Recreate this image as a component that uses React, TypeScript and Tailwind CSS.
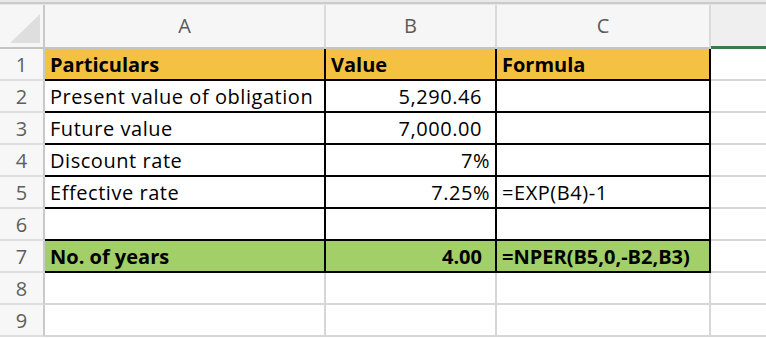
import React from 'react'

type Row = {
  n: number
  a?: string
  b?: string
  c?: string
  kind?: 'head' | 'total' | 'plain' | 'empty'
  bPad?: 'num' | 'pct'
}

const rows: Row[] = [
  { n: 1, a: 'Particulars', b: 'Value', c: 'Formula', kind: 'head' },
  { n: 2, a: 'Present value of obligation', b: '5,290.46', bPad: 'num' },
  { n: 3, a: 'Future value', b: '7,000.00', bPad: 'num' },
  { n: 4, a: 'Discount rate', b: '7%', bPad: 'pct' },
  { n: 5, a: 'Effective rate', b: '7.25%', c: '=EXP(B4)-1', bPad: 'pct' },
  { n: 6 },
  { n: 7, a: 'No. of years', b: '4.00', c: '=NPER(B5,0,-B2,B3)', kind: 'total', bPad: 'num' },
  { n: 8, kind: 'empty' },
  { n: 9, kind: 'empty' },
]

const ColHead = ({ label, last }: { label: string; last?: boolean }) => (
  <div
    className={
      last
        ? 'h-[44px] bg-[#efefef] border-b-[3px] border-[#3d7a4b]'
        : 'h-[44px] bg-[#f6f6f6] border-b-2 border-r-2 border-b-[#c4c4c4] border-r-[#dadada] flex items-center justify-center text-[20px] text-[#5b5b5b]'
    }
  >
    {label}
  </div>
)

const App = () => {
  return (
    <div className="w-[766px] h-[338px] overflow-hidden bg-white font-['Open_Sans','Liberation_Sans',sans-serif] text-black">
      <div className="h-[2px] bg-[#e8e8e8]" />
      <div className="h-[2px] bg-[#cbcbcb]" />
      <div className="h-[1px] bg-[#e6e6e6]" />

      <div className="grid grid-cols-[45px_281px_171px_214px_1fr]">
        {/* corner */}
        <div className="h-[44px] bg-[#f6f6f6] border-b-2 border-r-2 border-b-[#c4c4c4] border-r-[#c9c9c9]">
          <svg width="43" height="42" viewBox="0 0 43 42">
            <polygon points="10,38 40,38 40,9" fill="#dedede" />
          </svg>
        </div>
        <ColHead label="A" />
        <ColHead label="B" />
        <ColHead label="C" />
        <ColHead label="" last />

        {rows.map((r) => {
          const boxed = r.kind !== 'empty'
          const fill =
            r.kind === 'head'
              ? 'bg-[#f5c143] font-bold'
              : r.kind === 'total'
                ? 'bg-[#a3cf68] font-bold'
                : 'bg-white tracking-[0.55px]'
          const edge = boxed
            ? 'border-r-2 border-b-2 border-black'
            : 'border-r-2 border-b-2 border-[#d6d6d6]'
          const bAlign =
            r.kind === 'head'
              ? 'justify-start pl-[5px]'
              : r.bPad === 'num'
                ? 'justify-end pr-[13px]'
                : 'justify-end pr-[5px]'
          return (
            <React.Fragment key={r.n}>
              <div className="h-[32px] bg-[#f7f7f7] border-r-2 border-b-2 border-r-[#c9c9c9] border-b-[#dedede] flex items-end justify-center pb-[1px] text-[20px] leading-[26px] text-[#5e5e5e]">
                {r.n}
              </div>
              <div className={`h-[32px] ${fill} ${edge} flex items-end pl-[5px] pb-[1px] text-[20px] leading-[26px] whitespace-nowrap`}>
                {r.a}
              </div>
              <div className={`h-[32px] ${fill} ${edge} flex items-end ${bAlign} pb-[1px] text-[20px] leading-[26px] whitespace-nowrap`}>
                {r.b}
              </div>
              <div className={`h-[32px] ${fill} ${edge} flex items-end pl-[5px] pb-[1px] text-[20px] leading-[26px] whitespace-nowrap`}>
                {r.c}
              </div>
              <div className="h-[32px] bg-white border-b-2 border-[#d6d6d6]" />
            </React.Fragment>
          )
        })}
      </div>
    </div>
  )
}

export default App
